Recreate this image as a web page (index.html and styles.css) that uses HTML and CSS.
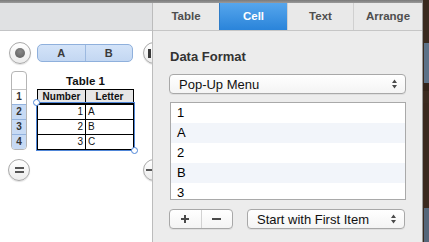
FILE: index.html
```html
<!DOCTYPE html>
<html>
<head>
<meta charset="utf-8">
<link rel="stylesheet" href="styles.css">
</head>
<body>
<div class="screen">
  <div class="window">
    <div class="topline"></div>
    <div class="panes">
      <div class="canvas">
        <div class="toolbar"></div>
        <div class="sheet">
          <div class="sheet-grid">
            <div class="circle select-all"><span class="dot"></span></div>
            <div class="col-head"><span>A</span><span>B</span></div>
            <div class="circle add-col"><span class="bar"></span></div>

            <div class="row-head">
              <div class="rh-top"></div>
              <div class="rh">1</div>
              <div class="rh sel">2</div>
              <div class="rh sel">3</div>
              <div class="rh sel">4</div>
            </div>
            <div class="table-block">
              <div class="table-title">Table 1</div>
              <div class="table-wrap">
                <div class="cell th c1">Number</div>
                <div class="cell th c2">Letter</div>
                <div class="cell num c1">1</div>
                <div class="cell c2">A</div>
                <div class="cell num c1">2</div>
                <div class="cell c2">B</div>
                <div class="cell num c1 last">3</div>
                <div class="cell c2 last">C</div>
                <div class="selection">
                  <span class="handle tl"></span>
                  <span class="handle br"></span>
                </div>
              </div>
            </div>
            <div></div>

            <div class="circle eq"><span class="eq-glyph"></span></div>
            <div></div>
            <div class="circle minus"><span class="dash"></span></div>
          </div>
        </div>
      </div>

      <div class="inspector">
        <div class="tabs">
          <div class="tab">Table</div>
          <div class="tab active">Cell</div>
          <div class="tab">Text</div>
          <div class="tab">Arrange</div>
        </div>
        <div class="pane">
          <div class="section-title">Data Format</div>
          <div class="popup">
            <span>Pop-Up Menu</span>
            <svg class="arrows" width="7" height="10" viewBox="0 0 7 10"><path d="M3.5 0.5 L6 4 L1 4 Z M1 6 L6 6 L3.5 9.5 Z" fill="#4a4a4a"/></svg>
          </div>
          <div class="list">
            <div class="item">1</div>
            <div class="item alt">A</div>
            <div class="item">2</div>
            <div class="item alt">B</div>
            <div class="item">3</div>
          </div>
          <div class="controls">
            <div class="seg">
              <span class="seg-btn plus"></span>
              <span class="seg-btn minus-btn"></span>
            </div>
            <div class="popup start">
              <span>Start with First Item</span>
              <svg class="arrows" width="7" height="10" viewBox="0 0 7 10"><path d="M3.5 0.5 L6 4 L1 4 Z M1 6 L6 6 L3.5 9.5 Z" fill="#4a4a4a"/></svg>
            </div>
          </div>
        </div>
      </div>
    </div>
  </div>
  <div class="desktop">
    <div class="d1"></div>
    <div class="d2"></div>
    <div class="d3"></div>
    <div class="d4"></div>
    <div class="d5"></div>
  </div>
</div>
</body>
</html>
```

FILE: styles.css
```css
* { box-sizing: border-box; }
html, body { margin: 0; padding: 0; }
body {
  width: 429px;
  height: 242px;
  overflow: hidden;
  font-family: "Liberation Sans", Arial, sans-serif;
  background: #ececec;
}
.screen { display: flex; width: 429px; height: 242px; }
.window { width: 423px; height: 242px; display: flex; flex-direction: column; }
.topline { height: 3px; background: linear-gradient(#7a7a7a, #9a9a9a); flex: none; }
.panes { display: flex; flex: 1; min-height: 0; }

/* ---------- canvas (left) ---------- */
.canvas {
  width: 153px;
  flex: none;
  border-right: 1px solid #bcbcbc;
  background: #fff;
  overflow: hidden;
  display: flex;
  flex-direction: column;
}
.toolbar {
  height: 28px;
  flex: none;
  background: #e0e1e3;
  border-bottom: 1px solid #c3c4c6;
}
.sheet { flex: 1; padding: 11px 0 0 9px; }
.sheet-grid {
  display: grid;
  grid-template-columns: 28px 106px 22px;
  row-gap: 7px;
  width: 156px;
}
.circle {
  width: 22px;
  height: 22px;
  border-radius: 50%;
  border: 1px solid #a9a9a9;
  background: linear-gradient(#ffffff, #ececec);
  box-shadow: 0 1px 1px rgba(0,0,0,0.12);
  display: flex;
  align-items: center;
  justify-content: center;
}
.select-all .dot {
  width: 10px; height: 10px; border-radius: 50%;
  background: radial-gradient(circle at 50% 35%, #8a8a8a, #5c5c5c);
}
.add-col .bar { width: 3px; height: 9px; background: #3a3a3a; margin-left: -10px; }
.eq { margin-top: 2px; margin-left: -1px; }
.minus { margin-top: 2px; }
.eq-glyph {
  width: 9px; height: 6px;
  border-top: 2px solid #555;
  border-bottom: 2px solid #555;
}
.minus .dash { width: 8px; height: 2px; background: #555; margin-left: -8px; }

.col-head {
  align-self: center;
  width: 96px;
  height: 18px;
  display: flex;
  border: 1px solid #8fb0dc;
  border-radius: 5px;
  background: linear-gradient(#d3e3f8, #c3d7f2);
  overflow: hidden;
}
.col-head span {
  flex: 1;
  text-align: center;
  font-weight: bold;
  font-size: 11px;
  line-height: 16px;
  color: #3a3a3a;
}
.col-head span + span { border-left: 1px solid #9cb9e0; }

.row-head {
  margin-left: 2px;
  width: 16px;
  border: 1px solid #b5b5b5;
  border-radius: 4px;
  overflow: hidden;
  background: #fff;
}
.rh-top { height: 17px; }
.rh {
  height: 15px;
  border-top: 1px solid #c4c4c4;
  font-size: 10px;
  font-weight: bold;
  line-height: 14px;
  text-align: center;
  color: #333;
}
.rh.sel { background: #c7daf4; border-top-color: #93b3de; }

.table-block { width: 97px; }
.table-title {
  height: 18px;
  padding-top: 2px;
  font-size: 11.5px;
  font-weight: bold;
  line-height: 16px;
  text-align: center;
  color: #111;
}
.table-wrap {
  position: relative;
  width: 97px;
  border: 1px solid #000;
  display: grid;
  grid-template-columns: 48px 47px;
}
.cell {
  height: 15px;
  font-size: 10px;
  line-height: 14px;
  color: #111;
  border-bottom: 1px solid #000;
  padding: 0 2px;
}
.cell.c1 { border-right: 1px solid #000; }
.cell.th {
  height: 15px;
  line-height: 13px;
  background: #e6e6e6;
  font-weight: bold;
  text-align: center;
  border-bottom: 2px solid #000;
}
.cell.num { text-align: right; }
.cell.last { border-bottom: none; height: 14px; }
.selection {
  position: absolute;
  left: -2px;
  top: 12px;
  width: 99px;
  height: 49px;
  border: 1px solid #4f86d8;
}
.handle {
  position: absolute;
  width: 7px; height: 7px;
  border-radius: 50%;
  background: #fff;
  border: 1px solid #4f86d8;
}
.handle.tl { left: -4px; top: -4px; }
.handle.br { right: -4px; bottom: -4px; }

/* ---------- inspector ---------- */
.inspector {
  flex: 1;
  background: #ececec;
  display: flex;
  flex-direction: column;
  border-right: 1px solid #9a9a9a;
}
.tabs {
  height: 28px;
  flex: none;
  display: grid;
  grid-template-columns: 66px 68px 66px 1fr;
  background: #e9e9e9;
  border-bottom: 1px solid #c6c6c6;
}
.tab {
  font-size: 11.5px;
  font-weight: bold;
  color: #4e4e4e;
  text-align: center;
  line-height: 27px;
  border-left: 1px solid #d0d0d0;
}
.tab:first-child { border-left: none; }
.tab.active {
  background: linear-gradient(#56a6ec, #2a84da);
  color: #fff;
  border-left-color: #2e7cc8;
}
.pane { padding: 18px 16px 0 16px; }
.section-title {
  margin-left: 1px;
  font-size: 13px;
  font-weight: bold;
  line-height: 16px;
  color: #333;
}
.popup {
  margin-top: 9px;
  height: 20px;
  border: 1px solid #a8a8a8;
  border-radius: 4px;
  background: linear-gradient(#ffffff, #f4f4f4);
  box-shadow: 0 1px 0 rgba(0,0,0,0.06);
  display: flex;
  align-items: center;
  justify-content: space-between;
  padding: 0 7px 0 9px;
  font-size: 13px;
  color: #111;
}
.arrows { flex: none; }
.list {
  margin: 8px 0 0 1px;
  height: 98px;
  border: 1px solid #a9a9a9;
  background: #fff;
  overflow: hidden;
}
.item {
  height: 20px;
  line-height: 20px;
  padding-left: 6px;
  font-size: 13px;
  color: #000;
}
.item.alt { background: #f2f5fa; }
.controls {
  margin-top: 9px;
  display: flex;
  gap: 14px;
}
.seg {
  width: 64px;
  height: 20px;
  display: flex;
  border: 1px solid #a8a8a8;
  border-radius: 4px;
  background: linear-gradient(#ffffff, #f4f4f4);
  box-shadow: 0 1px 0 rgba(0,0,0,0.06);
}
.seg-btn { flex: 1; position: relative; display: flex; align-items: center; justify-content: center; }
.seg-btn + .seg-btn { border-left: 1px solid #d2d2d2; }
.plus::before, .plus::after, .minus-btn::before {
  content: "";
  position: absolute;
  background: #4a4a4a;
}
.plus::before { width: 8px; height: 2px; }
.plus::after { width: 2px; height: 8px; }
.minus-btn::before { width: 9px; height: 2px; }
.popup.start { margin-top: 0; width: 158px; }

/* ---------- desktop strip ---------- */
.desktop {
  width: 6px;
  flex: none;
  display: flex;
  flex-direction: column;
  background: #33241a;
}
.d1 { height: 43px; background: #3a2a1f; }
.d2 { height: 40px; background: linear-gradient(90deg, #3a2a1f 0 1px, #5d7288 1px); }
.d3 { height: 20px; background: #3b2b20; border-top: 8px solid #33241a; }
.d4 { height: 105px; background: #3a291e; }
.d5 { flex: 1; background: linear-gradient(90deg, #3a2a1f 0 1px, #56677a 1px); }
```
